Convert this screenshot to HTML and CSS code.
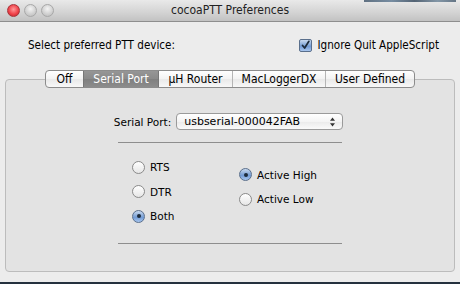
FILE: index.html
```html
<!DOCTYPE html>
<html>
<head>
<meta charset="utf-8">
<link rel="stylesheet" href="styles.css">
</head>
<body>
<div class="window">
  <div class="titlebar">
    <div class="lights">
      <span class="light red"></span>
      <span class="light"></span>
      <span class="light"></span>
    </div>
    <div class="title">cocoaPTT Preferences</div>
    <div class="desk-top"></div>
  </div>
  <div class="content">
    <div class="top-row">
      <span class="label">Select preferred PTT device:</span>
      <label class="check-wrap"><span class="checkbox"><svg width="13" height="13" viewBox="0 0 13 13"><path d="M3 6.5 L5.5 9.5 L10.5 1.5" fill="none" stroke="#1c2a3a" stroke-width="2" stroke-linecap="round" stroke-linejoin="round"/></svg></span><span class="label">Ignore Quit AppleScript</span></label>
    </div>
    <div class="tabs">
      <span class="seg seg-off">Off</span>
      <span class="seg seg-serial selected">Serial Port</span>
      <span class="seg seg-uh">µH Router</span>
      <span class="seg seg-mac">MacLoggerDX</span>
      <span class="seg seg-user">User Defined</span>
    </div>
    <div class="box">
      <div class="port-row">
        <span class="small">Serial Port:</span>
        <div class="popup">
          <span class="popup-text">usbserial-000042FAB</span>
          <svg class="arrows" width="7" height="10" viewBox="0 0 7 10"><path d="M3.5 0.5 L6 3.8 L1 3.8 Z M3.5 9.5 L6 6.2 L1 6.2 Z" fill="#333"/></svg>
        </div>
      </div>
      <div class="sep"></div>
      <div class="radios">
        <div class="col col-left">
          <div class="radio-row"><span class="radio"></span><span class="small">RTS</span></div>
          <div class="radio-row"><span class="radio"></span><span class="small">DTR</span></div>
          <div class="radio-row"><span class="radio on"></span><span class="small">Both</span></div>
        </div>
        <div class="col col-right">
          <div class="radio-row"><span class="radio on"></span><span class="small">Active High</span></div>
          <div class="radio-row"><span class="radio"></span><span class="small">Active Low</span></div>
        </div>
      </div>
      <div class="sep sep-bottom"></div>
    </div>
  </div>
  <div class="desk"></div>
</div>
</body>
</html>
```
FILE: styles.css
```css
* { box-sizing: border-box; }
html, body { margin: 0; padding: 0; }
body {
  width: 460px;
  height: 284px;
  overflow: hidden;
  background: #ececec;
  font-family: "DejaVu Sans", "Liberation Sans", sans-serif;
  color: #000;
}
.window {
  width: 460px;
  height: 284px;
  display: flex;
  flex-direction: column;
  background: #ececec;
}
.titlebar {
  height: 22px;
  flex: none;
  background: linear-gradient(#e9e9e9, #d3d3d3 60%, #c2c2c2);
  border-bottom: 1px solid #8e8e8e;
  display: flex;
  align-items: center;
  position: relative;
}
.desk-top {
  position: absolute;
  top: 0;
  left: 364px;
  width: 92px;
  height: 2px;
  background: linear-gradient(90deg, #3e5368, #5b7690 30%, #2f4357 55%, #6a8297 80%, #44596d);
  opacity: 0.8;
}
.lights {
  display: flex;
  gap: 4px;
  padding-left: 7px;
}
.light {
  width: 13px;
  height: 13px;
  border-radius: 50%;
  border: 1px solid #a8a8a8;
  background: radial-gradient(circle at 50% 35%, #f4f4f4, #cfcfcf 60%, #b8b8b8);
}
.light.red {
  border-color: #a8343a;
  background: radial-gradient(circle at 50% 40%, #ff9a9a, #f0434b 55%, #b81f26);
}
.title {
  position: absolute;
  left: 0; right: 0; top: 0; bottom: 0;
  text-align: center;
  font-family: "DejaVu Sans Condensed", "DejaVu Sans", sans-serif;
  font-size: 12px;
  line-height: 21px;
  color: #222;
}
.content {
  flex: 1;
  display: flex;
  flex-direction: column;
}
.top-row {
  margin-top: 15px;
  height: 16px;
  display: flex;
  justify-content: space-between;
  align-items: center;
  padding: 0 21px 0 28px;
}
.label {
  font-family: "DejaVu Sans Condensed", "DejaVu Sans", sans-serif;
  font-size: 11.6px;
  line-height: 16px;
}
.check-wrap {
  display: flex;
  align-items: center;
  gap: 5px;
}
.checkbox {
  width: 13px;
  height: 13px;
  border: 1px solid #5a6f8c;
  border-radius: 2px;
  background: linear-gradient(#c9daf0, #7ea3d6 50%, #6a95d3 51%, #a8c6ee);
  display: flex;
  align-items: center;
  justify-content: center;
}
.checkbox svg { display: block; }
.tabs {
  margin: 17px auto 0;
  display: flex;
  height: 18px;
  border: 1px solid #8c8c8c;
  border-radius: 4px;
  background: linear-gradient(#ffffff, #f3f3f3 50%, #e9e9e9 51%, #f8f8f8);
  position: relative;
  z-index: 1;
  overflow: hidden;
}
.seg {
  font-family: "DejaVu Sans Condensed", "DejaVu Sans", sans-serif;
  font-size: 12px;
  line-height: 16px;
  text-align: center;
  border-left: 1px solid #b5b5b5;
}
.seg:first-child { border-left: none; }
.seg-off { width: 37px; }
.seg-serial { width: 75px; }
.seg-uh { width: 74px; }
.seg-mac { width: 93px; }
.seg-user { width: 89px; }
.seg.selected {
  background: linear-gradient(#969696, #8a8a8a 50%, #7f7f7f 51%, #8c8c8c);
  color: #fff;
  border-left-color: #777;
}
.seg.selected + .seg { border-left-color: #777; }
.box {
  margin: -9px 5px 0;
  height: 193px;
  border: 1px solid #bcbcbc;
  border-radius: 4px;
  background: #e3e3e3;
  display: flex;
  flex-direction: column;
  align-items: center;
  padding-top: 33px;
}
.small {
  font-size: 10.5px;
  line-height: 14px;
}
.popup-text {
  font-size: 11px;
  line-height: 14px;
}
.port-row {
  display: flex;
  align-items: center;
  gap: 5px;
  margin-left: -3px;
}
.popup {
  width: 167px;
  height: 17px;
  border: 1px solid #9a9a9a;
  border-radius: 4px;
  background: linear-gradient(#ffffff, #f4f4f4 50%, #eaeaea 51%, #fafafa);
  display: flex;
  align-items: center;
  justify-content: space-between;
  padding: 0 6px 0 7px;
}
.arrows { display: block; }
.sep {
  width: 224px;
  height: 1px;
  background: #8e8e8e;
  margin-top: 12px;
}
.radios {
  display: flex;
  width: 224px;
  padding-left: 14px;
  margin-top: 12px;
}
.col {
  display: flex;
  flex-direction: column;
}
.col-left { width: 107px; }
.col-right { padding-top: 7.5px; }
.radio-row {
  height: 24.5px;
  display: flex;
  align-items: center;
  gap: 5px;
}
.radio {
  width: 13px;
  height: 13px;
  border-radius: 50%;
  border: 1px solid #8a8a8a;
  background: linear-gradient(#ffffff, #e6e6e6);
  display: flex;
  align-items: center;
  justify-content: center;
}
.radio.on {
  border-color: #5a6f8c;
  background: linear-gradient(#c9daf0, #7ea3d6 50%, #6a95d3 51%, #a8c6ee);
}
.radio.on::after {
  content: "";
  width: 4px;
  height: 4px;
  border-radius: 50%;
  background: #1c2a3a;
}
.sep-bottom { margin-top: 14px; }
.desk {
  margin-top: auto;
  height: 2px;
  background: #25313e;
}
```
